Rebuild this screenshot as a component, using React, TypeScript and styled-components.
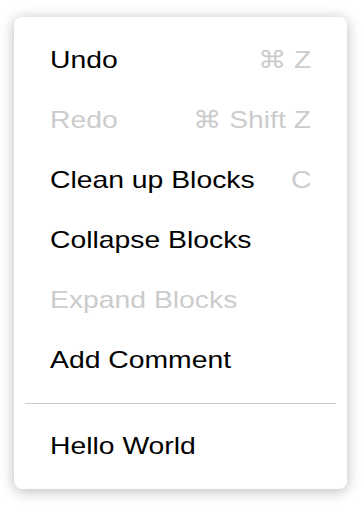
import React from "react";
import styled, { createGlobalStyle } from "styled-components";

const Global = createGlobalStyle`
  html, body { margin: 0; padding: 0; background: #ffffff; }
  body { font-family: "Liberation Sans", Arial, Helvetica, sans-serif; }
`;

const Page = styled.div`
  padding: 17px 17px 17px 14px;
`;

const Menu = styled.div`
  width: 333px;
  box-sizing: border-box;
  background: #ffffff;
  border-radius: 8px;
  box-shadow: 0 2px 14px rgba(0, 0, 0, 0.28);
  padding: 13px 0;
  display: flex;
  flex-direction: column;
`;

const Item = styled.div<{ $disabled?: boolean }>`
  display: flex;
  align-items: center;
  justify-content: space-between;
  padding: 16px 36px;
  font-size: 24px;
  line-height: 28px;
  color: ${(p) => (p.$disabled ? "#cccccc" : "#000000")};
  white-space: nowrap;
`;

/* the reference glyphs are drawn about 18% wider than tall */
const Text = styled.span<{ $align?: "left" | "right" }>`
  display: inline-block;
  transform: scaleX(1.18);
  transform-origin: ${(p) => (p.$align === "right" ? "right" : "left")} center;
`;

const Shortcut = styled(Text)`
  color: #cccccc;
`;

const Divider = styled.div`
  height: 1px;
  background: #cccccc;
  margin: 13px 11px 12px;
`;

const items: { label: string; shortcut?: string; disabled?: boolean }[] = [
  { label: "Undo", shortcut: "⌘ Z" },
  { label: "Redo", shortcut: "⌘ Shift Z", disabled: true },
  { label: "Clean up Blocks", shortcut: "C" },
  { label: "Collapse Blocks" },
  { label: "Expand Blocks", disabled: true },
  { label: "Add Comment" },
];

export default function App() {
  return (
    <>
      <Global />
      <Page>
        <Menu>
          {items.map((it) => (
            <Item key={it.label} $disabled={it.disabled}>
              <Text>{it.label}</Text>
              {it.shortcut && <Shortcut $align="right">{it.shortcut}</Shortcut>}
            </Item>
          ))}
          <Divider />
          <Item>
            <Text>Hello World</Text>
          </Item>
        </Menu>
      </Page>
    </>
  );
}
